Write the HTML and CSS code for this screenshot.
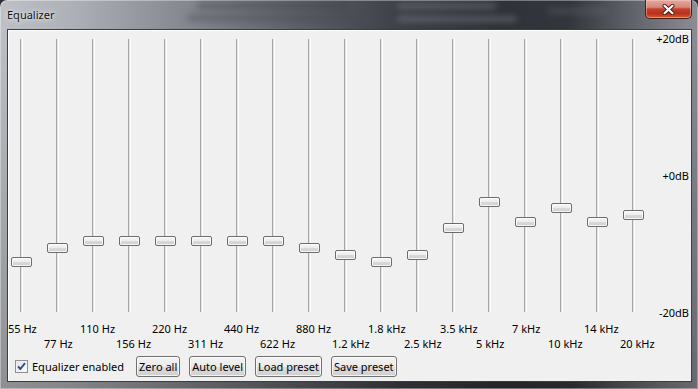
FILE: index.html
```html
<!DOCTYPE html>
<html>
<head>
<meta charset="utf-8">
<title>Equalizer</title>
<link rel="stylesheet" href="styles.css">
</head>
<body>
<div class="window">
  <div class="titlebar">
    <div class="glass-blur">
      <span class="blob b1"></span><span class="blob b2"></span><span class="blob b3"></span><span class="blob b4"></span><span class="blob b5"></span>
    </div>
    <span class="title">Equalizer</span>
    <button class="close" aria-label="Close">
      <svg width="13" height="11" viewBox="0 0 13 11"><path d="M2.5 1.8 L10.5 9.2 M10.5 1.8 L2.5 9.2" stroke="#4a1b12" stroke-width="4" stroke-linecap="round" fill="none"/><path d="M2.5 1.8 L10.5 9.2 M10.5 1.8 L2.5 9.2" stroke="#ffffff" stroke-width="2.2" stroke-linecap="round" fill="none"/></svg>
    </button>
  </div>
  <div class="client">
    <div class="eq">
      <div class="sliders">
        <div class="slider"><div class="track"></div><div class="thumb" style="top:227px"></div></div>
        <div class="slider"><div class="track"></div><div class="thumb" style="top:213px"></div></div>
        <div class="slider"><div class="track"></div><div class="thumb" style="top:206px"></div></div>
        <div class="slider"><div class="track"></div><div class="thumb" style="top:206px"></div></div>
        <div class="slider"><div class="track"></div><div class="thumb" style="top:206px"></div></div>
        <div class="slider"><div class="track"></div><div class="thumb" style="top:206px"></div></div>
        <div class="slider"><div class="track"></div><div class="thumb" style="top:206px"></div></div>
        <div class="slider"><div class="track"></div><div class="thumb" style="top:206px"></div></div>
        <div class="slider"><div class="track"></div><div class="thumb" style="top:213px"></div></div>
        <div class="slider"><div class="track"></div><div class="thumb" style="top:220px"></div></div>
        <div class="slider"><div class="track"></div><div class="thumb" style="top:227px"></div></div>
        <div class="slider"><div class="track"></div><div class="thumb" style="top:220px"></div></div>
        <div class="slider"><div class="track"></div><div class="thumb" style="top:193px"></div></div>
        <div class="slider"><div class="track"></div><div class="thumb" style="top:167px"></div></div>
        <div class="slider"><div class="track"></div><div class="thumb" style="top:187px"></div></div>
        <div class="slider"><div class="track"></div><div class="thumb" style="top:173px"></div></div>
        <div class="slider"><div class="track"></div><div class="thumb" style="top:187px"></div></div>
        <div class="slider"><div class="track"></div><div class="thumb" style="top:180px"></div></div>
      </div>
      <div class="scale">
        <span>+20dB</span>
        <span>+0dB</span>
        <span>-20dB</span>
      </div>
    </div>
    <div class="freqs">
      <div class="freq-row">
        <span>55 Hz</span><span>110 Hz</span><span>220 Hz</span><span>440 Hz</span><span>880 Hz</span><span>1.8 kHz</span><span>3.5 kHz</span><span>7 kHz</span><span>14 kHz</span>
      </div>
      <div class="freq-row odd">
        <span>77 Hz</span><span>156 Hz</span><span>311 Hz</span><span>622 Hz</span><span>1.2 kHz</span><span>2.5 kHz</span><span>5 kHz</span><span>10 kHz</span><span>20 kHz</span>
      </div>
    </div>
    <div class="controls">
      <label class="check">
        <span class="box"><svg width="13" height="13" viewBox="0 0 13 13"><path d="M3 6.3 L5.4 9 L10 3.2" stroke="#2a4a9a" stroke-width="1.9" fill="none" stroke-linejoin="round"/></svg></span>
        <span>Equalizer enabled</span>
      </label>
      <button class="btn">Zero all</button>
      <button class="btn">Auto level</button>
      <button class="btn">Load preset</button>
      <button class="btn">Save preset</button>
    </div>
  </div>
</div>
</body>
</html>
```
FILE: styles.css
```css
* { box-sizing: border-box; }
html, body { margin: 0; padding: 0; }
body {
  width: 698px;
  height: 389px;
  overflow: hidden;
  background: #2b2d33;
  font-family: "Noto Sans", "Open Sans", sans-serif;
  font-size: 11px;
  color: #000;
}
.window {
  position: relative;
  width: 698px;
  height: 389px;
  display: flex;
  flex-direction: column;
  padding: 0 6px 7px 7px;
  border-radius: 7px 7px 0 0;
  background:
    linear-gradient(to bottom, rgba(0,0,0,0) 0, rgba(0,0,0,0) 30px, rgba(0,0,0,0.25) 100%),
    linear-gradient(to right, #bdc0c6 0, #aeb1b7 70px, #8a8d94 170px, #5c5f67 300px, #3e4048 400px, #303239 500px, #34363d 570px, #5c5e65 625px, #8b8e95 698px);
  box-shadow: inset 0 0 0 1px rgba(255,255,255,0.35);
  overflow: hidden;
}
.titlebar {
  position: relative;
  height: 29px;
  flex: none;
  display: flex;
  justify-content: space-between;
  align-items: flex-start;
}
.glass-blur {
  position: absolute;
  inset: 0;
  pointer-events: none;
}
.blob {
  position: absolute;
  height: 6px;
  border-radius: 3px;
  filter: blur(3px);
}
.b1 { left: 190px; top: 3px; width: 150px; background: rgba(60,62,70,0.45); }
.b2 { left: 180px; top: 15px; width: 170px; background: rgba(70,72,80,0.45); }
.b3 { left: 390px; top: 3px; width: 100px; background: rgba(150,152,160,0.35); }
.b4 { left: 390px; top: 16px; width: 120px; background: rgba(150,152,160,0.35); }
.b5 { left: 540px; top: 8px; width: 60px; background: rgba(120,122,130,0.25); }
.title {
  position: relative;
  margin-top: 7px;
  line-height: 15px;
  color: #101010;
  text-shadow: 0 0 6px rgba(255,255,255,0.9), 0 0 2px rgba(255,255,255,0.7);
}
.close {
  position: relative;
  width: 47px;
  height: 19px;
  margin: 0;
  padding: 0;
  display: flex;
  align-items: center;
  justify-content: center;
  border: 1px solid #4a1d16;
  border-top: none;
  border-radius: 0 0 5px 5px;
  background: linear-gradient(to bottom, #e3a99e 0, #d8877a 40%, #c4412d 50%, #b8301b 75%, #d0603a 100%);
  box-shadow: inset 0 0 0 1px rgba(255,210,200,0.45);
}
.client {
  flex: 1;
  display: flex;
  flex-direction: column;
  background: #f0f0f0;
  border: 1px solid #3b3d43;
  box-shadow: inset 1px 1px 0 #ffffff;
}
.eq {
  display: flex;
  height: 291px;
}
.sliders {
  display: flex;
  width: 648px;
}
.slider {
  position: relative;
  width: 36px;
  height: 291px;
}
.track {
  width: 3px;
  height: 273px;
  margin: 9px 0 0 12px;
  background: #e2e2e2;
  border-left: 1px solid #a7a7a7;
  border-right: 1px solid #fdfdfd;
}
.thumb {
  position: absolute;
  left: 3px;
  width: 21px;
  height: 10px;
  border: 1px solid #6c6c6c;
  border-radius: 2px;
  background: linear-gradient(to bottom, #f6f6f6 0, #ececec 50%, #dadada 51%, #cfcfcf 100%);
  box-shadow: inset 0 0 0 1px rgba(255,255,255,0.8);
}
.scale {
  flex: 1;
  display: flex;
  flex-direction: column;
  justify-content: space-between;
  align-items: flex-end;
  padding: 1px 2px 0 0;
  line-height: 16px;
  white-space: nowrap;
}
.freqs {
  display: flex;
  flex-direction: column;
}
.freq-row {
  display: flex;
  height: 15px;
  line-height: 15px;
  white-space: nowrap;
}
.freq-row span {
  width: 72px;
  flex: none;
}
.freq-row.odd {
  padding-left: 36px;
}
.controls {
  display: flex;
  align-items: center;
  gap: 9px;
  height: 21px;
  margin-top: 5px;
  padding-left: 7px;
}
.check {
  display: flex;
  align-items: center;
  gap: 4px;
  margin-right: 3px;
  line-height: 15px;
}
.box {
  width: 13px;
  height: 13px;
  display: block;
  border: 1px solid #8e8f8f;
  background: linear-gradient(135deg, #dcdcdc 0, #f4f4f4 60%, #ffffff 100%);
  box-shadow: inset 0 0 0 1px #f4f4f4;
  position: relative;
}
.box svg {
  position: absolute;
  left: -1px;
  top: -1px;
}
.btn {
  height: 21px;
  margin: 0;
  padding: 0 2px;
  font: inherit;
  line-height: 15px;
  color: #000;
  border: 1px solid #707070;
  border-radius: 3px;
  background: linear-gradient(to bottom, #f2f2f2 0, #ebebeb 50%, #dddddd 51%, #cfcfcf 100%);
  box-shadow: inset 0 0 0 1px rgba(255,255,255,0.75);
}
```
